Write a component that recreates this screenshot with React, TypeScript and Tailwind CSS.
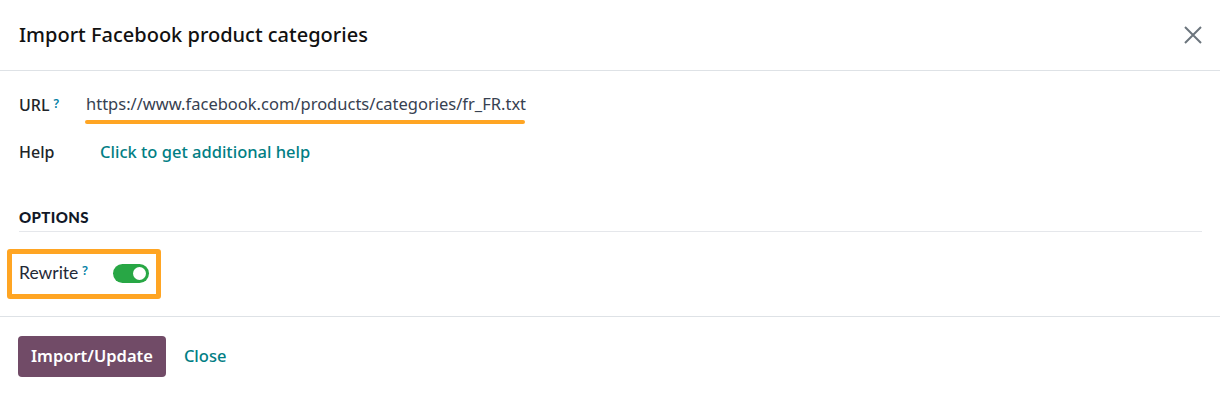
import React from 'react';

const Hint: React.FC = () => (
  <sup className="ml-1 text-[12px] font-semibold text-[#0180a5] relative -top-[3px]">?</sup>
);

export default function App() {
  return (
    <div className="w-[1220px] h-[393px] bg-white text-[#212529]" style={{ fontFamily: '"Noto Sans", "Open Sans", sans-serif' }}>
      {/* Header */}
      <div className="h-[71px] flex items-center justify-between pl-[19px] pr-[16px] border-b border-[#dee2e6]">
        <h1 className="text-[20px] font-medium text-[#111] -mt-[1px]">Import Facebook product categories</h1>
        <button className="text-[#6c757d]">
          <svg width="22" height="22" viewBox="0 0 22 22" fill="none" stroke="currentColor" strokeWidth="2">
            <path d="M3 3 L19 19 M19 3 L3 19" />
          </svg>
        </button>
      </div>

      {/* Body */}
      <div className="pl-[19px] pr-[18px] pt-[20px]">
        <div className="flex items-start h-[34px]">
          <div className="w-[67px] text-[16px] font-medium pt-[2px]">
            URL<Hint />
          </div>
          <div className="flex flex-col">
            <span className="text-[16.5px] text-[#374151] leading-[26px]">https://www.facebook.com/products/categories/fr_FR.txt</span>
            <div className="mt-[3px] h-[4px] w-[440px] -ml-[1px] rounded-full bg-[#ffa523]" />
          </div>
        </div>
        <div className="flex items-center h-[36px] mt-[9px]">
          <div className="w-[81px] text-[16px] font-medium">Help</div>
          <a className="text-[16.5px] font-medium text-[#017e84]">Click to get additional help</a>
        </div>

        <div className="mt-[36px] pb-[2px] border-b border-[#e5e7eb]" style={{ fontFamily: 'Lato, sans-serif' }}>
          <h2 className="text-[15px] font-black tracking-wide text-[#111827]">OPTIONS</h2>
        </div>

        <div className="mt-[17px] -ml-[12px] w-[154px] h-[50px] border-[5px] border-[#ffa523] rounded-[3px] flex items-center pl-[7px]">
          <span className="text-[17.5px] text-[#1f2937]" style={{ fontFamily: 'Lato, sans-serif' }}>Rewrite</span>
          <Hint />
          <div className="ml-[25px] w-[36px] h-[19px] rounded-full bg-[#28a745] flex items-center justify-end pr-[3px]">
            <div className="w-[13px] h-[13px] rounded-full bg-white" />
          </div>
        </div>
      </div>

      {/* Footer */}
      <div className="mt-[17px] border-t border-[#dee2e6] pl-[18px] pt-[19px] flex items-center gap-[18px]">
        <button className="h-[41px] px-[13px] rounded-[4px] bg-[#714b67] text-white text-[16.5px] font-semibold">Import/Update</button>
        <a className="text-[16.5px] font-medium text-[#017e84]">Close</a>
      </div>
    </div>
  );
}
